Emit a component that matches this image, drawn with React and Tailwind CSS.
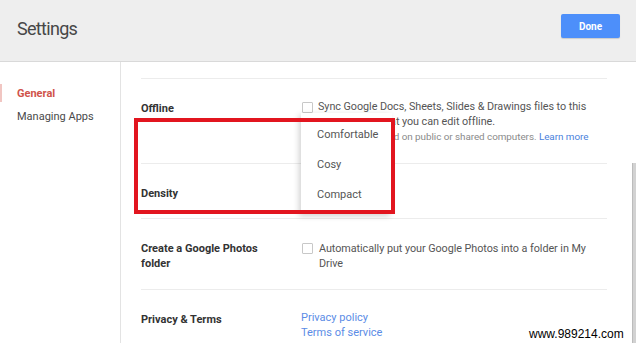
export default function App() {
  const font = { fontFamily: "Roboto, 'Liberation Sans', sans-serif" };
  return (
    <div className="relative w-[636px] h-[343px] overflow-hidden bg-white" style={font}>
      {/* Header */}
      <div className="h-[62px] bg-[#eeeeee] border-b border-[#d9d9d9] flex items-start justify-between pl-[17px] pr-[16px]">
        <div className="mt-[17px] h-[24px] leading-[24px] text-[18px] text-[#474747] tracking-[-0.7px]">Settings</div>
        <button className="mt-[14px] w-[59px] h-[24px] rounded-[2px] bg-[#4d8ffa] text-white text-[10px] font-bold shadow-[0_1px_1px_rgba(0,0,0,0.15)]">
          Done
        </button>
      </div>

      {/* Body */}
      <div className="flex h-[281px]">
        {/* Sidebar */}
        <div className="w-[121px] border-r border-[#e3e3e3] pt-[20px] shrink-0">
          <div className="relative h-[23px] leading-[23px] pl-[17px] text-[11px] font-bold text-[#d0534a]">
            <span className="absolute left-0 top-[2px] w-[2px] h-[18px] bg-[#f1c6c2]"></span>
            General
          </div>
          <div className="h-[23px] leading-[23px] pl-[17px] text-[11px] text-[#4a4a4a]">Managing Apps</div>
        </div>

        {/* Main */}
        <div className="pl-[20px] pt-[16px]">
          <div className="w-[466px] border-t border-[#ececec]">
            {/* Offline */}
            <div className="flex h-[85px] border-b border-[#ececec]">
              <div className="w-[160px] pt-[22px] text-[11px] leading-[15px] font-bold text-[#333]">Offline</div>
              <div className="flex pt-[20px]">
                <div className="mt-[3px] ml-[1px] mr-[5px] w-[11px] h-[11px] border border-[#c8c8c8] rounded-[1px] bg-white"></div>
                <div className="text-[10.8px] leading-[15px] text-[#555] tracking-[-0.05px]">
                  <div>Sync Google Docs, Sheets, Slides &amp; Drawings files to this</div>
                  <div>computer so that you can edit offline.</div>
                  <div className="text-[9.9px] text-[#8a8a8a]">
                    Not recommended on public or shared computers. <span className="text-[#4a7fdc]">Learn more</span>
                  </div>
                </div>
              </div>
            </div>
            {/* Density */}
            <div className="flex h-[55px] border-b border-[#ececec]">
              <div className="w-[160px] pt-[22px] text-[11px] leading-[15px] font-bold text-[#333]">Density</div>
            </div>
            {/* Photos */}
            <div className="flex h-[71px] border-b border-[#ececec]">
              <div className="w-[160px] pt-[22px] text-[11px] leading-[15px] font-bold text-[#333]">
                Create a Google Photos<br />folder
              </div>
              <div className="flex pt-[22px]">
                <div className="mt-[2px] ml-[1px] mr-[6px] w-[11px] h-[11px] border border-[#c8c8c8] rounded-[1px] bg-white"></div>
                <div className="text-[10.8px] leading-[15px] text-[#555] tracking-[-0.05px]">
                  <div>Automatically put your Google Photos into a folder in My</div>
                  <div>Drive</div>
                </div>
              </div>
            </div>
            {/* Privacy */}
            <div className="flex">
              <div className="w-[160px] pt-[22px] text-[11px] leading-[15px] font-bold text-[#333]">Privacy &amp; Terms</div>
              <div className="pt-[20px] text-[11px] leading-[15px] text-[#5b8ce6]">
                <div>Privacy policy</div>
                <div>Terms of service</div>
              </div>
            </div>
          </div>
        </div>
      </div>

      {/* Dropdown menu */}
      <div className="absolute left-[301px] top-[113px] w-[91px] h-[101px] bg-white shadow-[-2px_2px_6px_rgba(0,0,0,0.18)] text-[11px] text-[#555]">
        <div className="absolute left-[16px] top-[15px] leading-[14px]">Comfortable</div>
        <div className="absolute left-[16px] top-[45px] leading-[14px]">Cosy</div>
        <div className="absolute left-[16px] top-[75px] leading-[14px]">Compact</div>
      </div>

      {/* Red annotation rectangle */}
      <div className="absolute left-[134px] top-[118px] w-[261px] h-[96px] border-[4px] border-[#e2151f]"></div>

      {/* Scrollbar */}
      <div className="absolute left-[632px] top-[163px] w-[4px] h-[180px] bg-[#d2d2d2] border-l border-[#bcbcbc]"></div>

      {/* Watermark */}
      <div className="absolute left-[529px] top-[326px] text-[12px] leading-[16px] text-black bg-white" style={{ fontFamily: "'Liberation Sans', sans-serif" }}>
        www.989214.com
      </div>
    </div>
  );
}
